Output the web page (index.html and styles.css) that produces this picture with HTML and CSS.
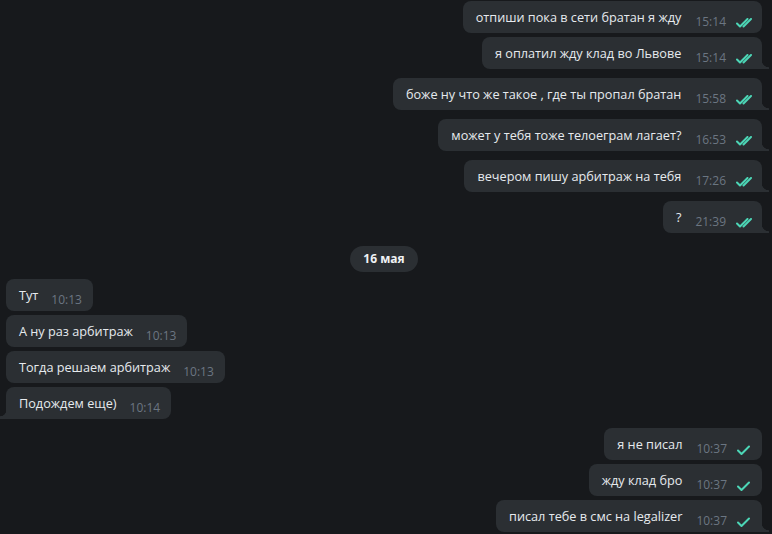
FILE: index.html
```html
<!DOCTYPE html>
<html lang="ru">
<head>
<meta charset="utf-8">
<link rel="stylesheet" href="styles.css">
</head>
<body>
<div class="chat">
  <div class="row out">
    <div class="bubble"><span class="text">отпиши пока в сети братан я жду</span><span class="time">15:14</span><svg class="check dbl" viewBox="0 0 18 10"><path d="M1 5.5 L4 8.5 L11.5 1 M7.5 8.5 L15 1"/></svg></div>
  </div>
  <div class="row out">
    <div class="bubble tail"><span class="text">я оплатил жду клад во Львове</span><span class="time">15:14</span><svg class="check dbl" viewBox="0 0 18 10"><path d="M1 5.5 L4 8.5 L11.5 1 M7.5 8.5 L15 1"/></svg></div>
  </div>
  <div class="row out sep">
    <div class="bubble tail"><span class="text">боже ну что же такое , где ты пропал братан</span><span class="time">15:58</span><svg class="check dbl" viewBox="0 0 18 10"><path d="M1 5.5 L4 8.5 L11.5 1 M7.5 8.5 L15 1"/></svg></div>
  </div>
  <div class="row out sep">
    <div class="bubble tail"><span class="text">может у тебя тоже телоеграм лагает?</span><span class="time">16:53</span><svg class="check dbl" viewBox="0 0 18 10"><path d="M1 5.5 L4 8.5 L11.5 1 M7.5 8.5 L15 1"/></svg></div>
  </div>
  <div class="row out sep">
    <div class="bubble tail"><span class="text">вечером пишу арбитраж на тебя</span><span class="time">17:26</span><svg class="check dbl" viewBox="0 0 18 10"><path d="M1 5.5 L4 8.5 L11.5 1 M7.5 8.5 L15 1"/></svg></div>
  </div>
  <div class="row out sep">
    <div class="bubble tail"><span class="text">?</span><span class="time">21:39</span><svg class="check dbl" viewBox="0 0 18 10"><path d="M1 5.5 L4 8.5 L11.5 1 M7.5 8.5 L15 1"/></svg></div>
  </div>
  <div class="row date-row">
    <div class="date">16 мая</div>
  </div>
  <div class="row in">
    <div class="bubble"><span class="text">Тут</span><span class="time">10:13</span></div>
  </div>
  <div class="row in">
    <div class="bubble"><span class="text">А ну раз арбитраж</span><span class="time">10:13</span></div>
  </div>
  <div class="row in">
    <div class="bubble"><span class="text">Тогда решаем арбитраж</span><span class="time">10:13</span></div>
  </div>
  <div class="row in">
    <div class="bubble tail"><span class="text">Подождем еще)</span><span class="time">10:14</span></div>
  </div>
  <div class="row out sep">
    <div class="bubble"><span class="text">я не писал</span><span class="time">10:37</span><svg class="check sgl" viewBox="0 0 13 10"><path d="M1 5.5 L4.5 9 L12 1.5"/></svg></div>
  </div>
  <div class="row out">
    <div class="bubble"><span class="text">жду клад бро</span><span class="time">10:37</span><svg class="check sgl" viewBox="0 0 13 10"><path d="M1 5.5 L4.5 9 L12 1.5"/></svg></div>
  </div>
  <div class="row out">
    <div class="bubble tail"><span class="text">писал тебе в смс на legalizer</span><span class="time">10:37</span><svg class="check sgl" viewBox="0 0 13 10"><path d="M1 5.5 L4.5 9 L12 1.5"/></svg></div>
  </div>
</div>
</body>
</html>
```

FILE: styles.css
```css
html, body {
  margin: 0;
  height: 100%;
  background: #17191c;
  overflow: hidden;
}

body {
  font-family: "Open Sans", "Noto Sans", sans-serif;
}

.chat {
  display: flex;
  flex-direction: column;
  gap: 4px;
  padding: 1px 10px 0 6px;
}

.row {
  display: flex;
}

.row.out {
  justify-content: flex-end;
}

.row.in {
  justify-content: flex-start;
}

.row.sep {
  margin-top: 5px;
}

.bubble {
  position: relative;
  display: flex;
  align-items: flex-end;
  box-sizing: border-box;
  height: 32px;
  padding: 6px 8px 6px 13px;
  background: #2b2f33;
  border-radius: 8px;
  color: #e6eaee;
  font-size: 12.7px;
  line-height: 20px;
}

.text {
  white-space: nowrap;
  margin-top: 1px;
}

.time {
  font-size: 12px;
  line-height: 16px;
  color: #6b7682;
  margin-left: 14px;
  margin-bottom: -3px;
  white-space: nowrap;
}

.check {
  fill: none;
  stroke: #4cd6b6;
  stroke-width: 2;
  stroke-linecap: round;
  stroke-linejoin: round;
  margin-bottom: -1px;
}

.check.dbl {
  width: 18px;
  height: 10px;
  margin-left: 10px;
}

.check.sgl {
  width: 13px;
  height: 10px;
  margin-left: 10px;
  margin-right: 4px;
}

.in .bubble {
  padding-right: 11px;
}

.in .time {
  margin-left: 13px;
}

.out .bubble.tail {
  border-bottom-right-radius: 0;
}

.out .bubble.tail::after {
  content: "";
  position: absolute;
  right: -7px;
  bottom: 0;
  width: 7px;
  height: 9px;
  background: radial-gradient(circle at 100% 0, transparent 7px, #2b2f33 7.6px);
}

.in .bubble.tail {
  border-bottom-left-radius: 0;
}

.in .bubble.tail::before {
  content: "";
  position: absolute;
  left: -6px;
  bottom: 0;
  width: 6px;
  height: 9px;
  background: radial-gradient(circle at 0 0, transparent 6px, #2b2f33 6.6px);
}

.date-row {
  justify-content: center;
  margin-top: 9px;
  margin-bottom: 3px;
}

.date {
  height: 26px;
  line-height: 26px;
  padding: 0 13px;
  border-radius: 13px;
  background: #2b2f33;
  color: #f0f2f4;
  font-size: 12px;
  font-weight: 700;
}
```
